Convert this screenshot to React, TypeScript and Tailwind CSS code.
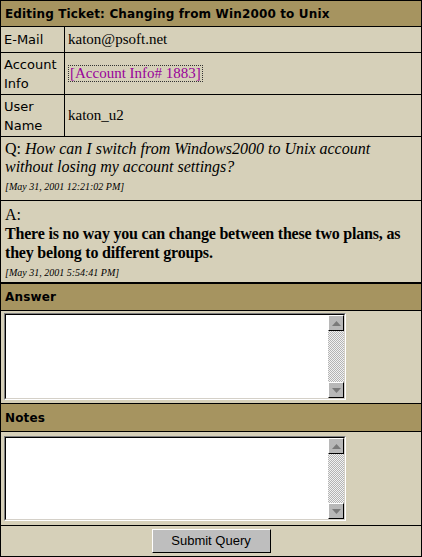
import React from 'react';

const sans = "font-['DejaVu_Sans',Verdana,sans-serif]";
const serif = "font-['Liberation_Serif','Times_New_Roman',serif]";

const ScrollArea = ({ className }: { className: string }) => (
  <div className={`w-[342px] border border-t-[#808080] border-l-[#808080] border-b-white border-r-white ${className}`}>
    <div className="flex h-full border border-t-black border-l-black border-b-[#d4d0c8] border-r-[#d4d0c8] bg-white">
      <div className="flex-1" />
      <div className="flex w-[16px] flex-col">
        <ArrowButton up />
        <div className="flex-1 bg-[repeating-conic-gradient(#b4b4b4_0_25%,#f2f2f2_0_50%)] bg-[length:2px_2px]" />
        <ArrowButton />
      </div>
    </div>
  </div>
);

const ArrowButton = ({ up }: { up?: boolean }) => (
  <div className="flex h-[16px] items-center justify-center border border-t-white border-l-white border-b-black border-r-black bg-[#b8b8b8]">
    <svg width="9" height="5" viewBox="0 0 9 5">
      {up ? <path d="M4.5 0L9 5H0z" fill="#7a7a7a" /> : <path d="M0 0h9L4.5 5z" fill="#7a7a7a" />}
    </svg>
  </div>
);

const Header = ({ title, h }: { title: string; h: string }) => (
  <div className={`flex items-center border-b border-black bg-[#a69460] px-[4px] text-[12px] font-bold tracking-[0.15px] ${sans} ${h}`}>
    {title}
  </div>
);

const Field = ({ label, h, children }: { label: React.ReactNode; h: string; children: React.ReactNode }) => (
  <div className={`flex border-b border-black ${h}`}>
    <div className={`flex w-[64px] items-center border-r border-black px-[3px] text-[13px] leading-[19px] ${sans}`}>{label}</div>
    <div className={`flex flex-1 items-center px-[3px] text-[15px] ${serif}`}>{children}</div>
  </div>
);

export default function App() {
  return (
    <div className="h-[557px] w-[422px] border border-black bg-[#d6d0b9] text-black">
      <Header title="Editing Ticket: Changing from Win2000 to Unix" h="h-[26px]" />
      <Field label="E-Mail" h="h-[26px]">katon@psoft.net</Field>
      <Field label={<span>Account<br />Info</span>} h="h-[42px]">
        <a href="#" className="border border-dotted border-[#333] px-[1px] leading-[15px] text-[#990099]">[Account Info# 1883]</a>
      </Field>
      <Field label={<span>User<br />Name</span>} h="h-[42px]">katon_u2</Field>

      <div className={`h-[64px] border-b border-black px-[4px] pt-[3px] ${serif}`}>
        <p className="text-[16px] leading-[18px]">
          Q: <i>How can I switch from Windows2000 to Unix account without losing my account settings?</i>
        </p>
        <p className="mt-[5px] text-[10px] italic leading-[12px]">[May 31, 2001 12:21:02 PM]</p>
      </div>

      <div className={`h-[83px] border-b-2 border-black px-[4px] pt-[4px] ${serif}`}>
        <p className="text-[16px] leading-[19px]">A:</p>
        <p className="text-[16px] font-bold leading-[19px] tracking-[-0.2px]">
          There is no way you can change between these two plans, as they belong to different groups.
        </p>
        <p className="mt-[5px] text-[10px] italic leading-[12px]">[May 31, 2001 5:54:41 PM]</p>
      </div>

      <Header title="Answer" h="h-[27px]" />
      <div className="h-[93px] border-b border-black pl-[3px] pt-[2px]">
        <ScrollArea className="h-[87px]" />
      </div>

      <Header title="Notes" h="h-[28px]" />
      <div className="h-[94px] border-b border-black pl-[3px] pt-[4px]">
        <ScrollArea className="h-[85px]" />
      </div>

      <div className="flex h-[30px] items-center justify-center">
        <button className="h-[24px] w-[119px] border border-t-white border-l-white border-b-black border-r-black bg-[#bebebe] font-['Liberation_Sans',Arial,sans-serif] text-[13px]">
          Submit Query
        </button>
      </div>
    </div>
  );
}
